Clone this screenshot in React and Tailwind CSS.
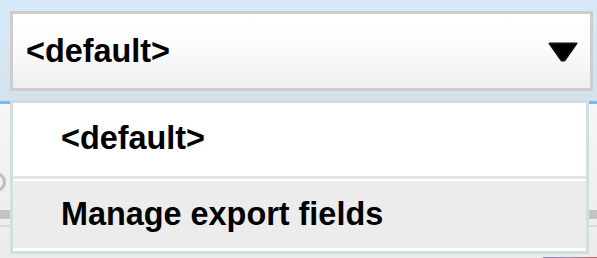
import React from 'react';

const font = { fontFamily: '"Liberation Sans", Arial, sans-serif' };

function Caret() {
  return (
    <svg width="30" height="20" viewBox="0 0 30 20" className="block">
      <path d="M1.5 1.5 L28.5 1.5 L16.5 18.5 L13.5 18.5 Z" fill="#000" stroke="#111" strokeWidth="2" strokeLinejoin="round" />
    </svg>
  );
}

export default function App() {
  return (
    <div className="relative w-[597px] h-[258px] overflow-hidden bg-[#f0f0f0]" style={font}>
      {/* select header */}
      <div className="h-[101px] pt-[11px] pl-[10px] pr-[4px] bg-gradient-to-b from-[#d7eaf9] to-[#d3e2ee]">
        <div className="h-[80px] border-[3px] border-[#cdcdcd] bg-gradient-to-b from-white via-[#fbfbfb] to-[#eeeeee] flex items-center justify-between pl-[13px] pr-[12px]">
          <span className="text-[32.4px] leading-none font-bold text-black">&lt;default&gt;</span>
          <div className="mt-[2px]"><Caret /></div>
        </div>
      </div>

      {/* page beneath */}
      <div className="h-[3px] bg-[#7cb9e9]" />
      <div className="h-[154px] bg-gradient-to-b from-[#f6f6f6] to-[#ebebeb] flex justify-between">
        <div className="w-[10px] flex flex-col overflow-hidden">
          <div className="h-[68px]" />
          <div className="w-[20px] h-[20px] -ml-[14px] rounded-full border-[3px] border-[#bdbdbd]" />
          <div className="h-[18px]" />
          <div className="h-[9px] bg-[#c4c4c4]" />
          <div className="h-[6px]" />
          <div className="h-[2px] bg-[#dcdcdc]" />
        </div>
        <div className="w-[8px] flex flex-col">
          <div className="h-[106px]" />
          <div className="h-[9px] bg-[#c4c4c4]" />
          <div className="h-[6px]" />
          <div className="h-[2px] bg-[#dcdcdc]" />
        </div>
      </div>
      <div className="absolute left-[543px] bottom-0 w-[54px] h-[1px] bg-gradient-to-r from-[#8a82c4] via-[#a58bb0] to-[#c25a5a]" />

      {/* dropdown menu */}
      <div className="absolute top-[100px] left-[10px] w-[579px] h-[154px] border-[3px] border-[#d3dfdf] bg-white flex flex-col">
        <div className="h-[73px] pt-[19px] pl-[48px] text-[32.4px] leading-none font-bold text-black">&lt;default&gt;</div>
        <div className="h-[3px] bg-[#e3e3e3]" />
        <div className="h-[2px] bg-white" />
        <div className="h-[67px] pt-[17px] pl-[48px] bg-[#ececec] text-[32.4px] leading-none font-bold text-black">Manage export fields</div>
      </div>
    </div>
  );
}
